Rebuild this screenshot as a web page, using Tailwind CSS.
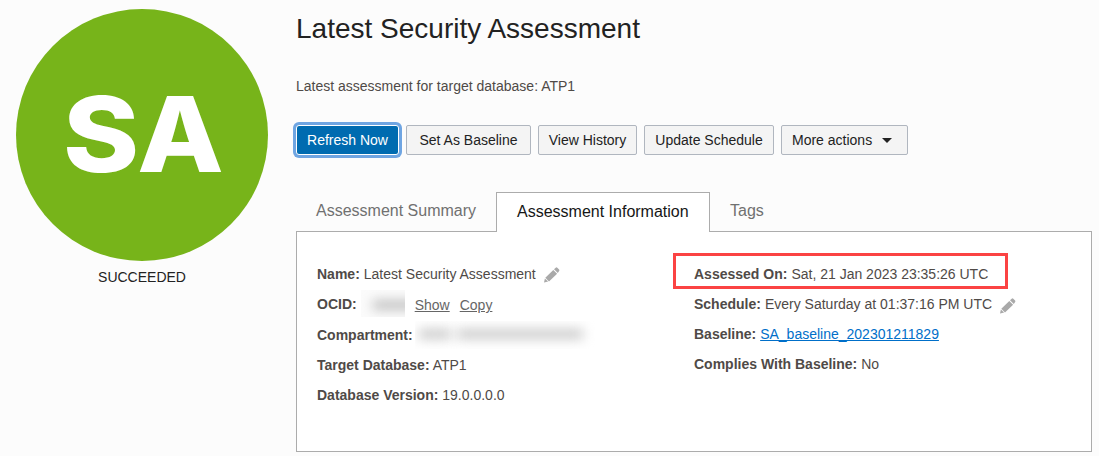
<!DOCTYPE html>
<html lang="en">
<head>
<meta charset="utf-8">
<title>Latest Security Assessment</title>
<script src="https://cdn.jsdelivr.net/npm/@tailwindcss/browser@4"></script>
</head>
<body class="h-[456px] w-[1099px] overflow-hidden bg-[#fcfcfc] font-['Liberation_Sans',Arial,sans-serif] text-sm leading-5 text-[#4f4a47]">
<div class="flex">
  <aside class="flex w-[268px] shrink-0 flex-col pt-[9px] pl-4">
    <svg class="size-[252px]" viewBox="0 0 252 252">
      <circle cx="126" cy="126" r="126" fill="#77b41a"/>
      <g font-family="Inter, 'Liberation Sans', sans-serif" font-weight="850" font-size="104" fill="#fff" text-anchor="middle">
        <text transform="translate(85 162.800) scale(1.110 1)">S</text>
        <text transform="translate(164.500 163) scale(1.080 1)">A</text>
      </g>
    </svg>
    <p class="mt-1.5 text-center text-[#222]"><span>SUCCEEDED</span></p>
  </aside>
  <main class="ml-7 w-[796px]">
    <h1 class="mt-[13px] text-[28px] leading-8 text-[#222]"><span>Latest Security Assessment</span></h1>
    <p class="mt-[31px]"><span>Latest assessment for target database: ATP1</span></p>
    <div class="mt-[29px] flex h-[30px] text-[#222]">
      <button class="h-[30px] w-[103px] rounded-[3px] border border-white bg-[#006bb0] text-white shadow-[0_0_0_3px_#6fa5e2]">Refresh Now</button>
      <button class="ml-[7px] h-[30px] w-[125px] rounded-[2px] border border-[#b0b6bf] bg-[#f4f4f4]">Set As Baseline</button>
      <button class="ml-[7px] h-[30px] w-[99px] rounded-[2px] border border-[#b0b6bf] bg-[#f4f4f4]">View History</button>
      <button class="ml-[7px] h-[30px] w-[130px] rounded-[2px] border border-[#b0b6bf] bg-[#f4f4f4]">Update Schedule</button>
      <button class="ml-[7px] flex h-[30px] w-[127px] items-center rounded-[2px] border border-[#b0b6bf] bg-[#f4f4f4] pl-2.5">More actions<svg class="ml-2.5 h-[5px] w-2.5" viewBox="0 0 10 5"><path d="M0 0h10L5 5z" fill="#222"/></svg></button>
    </div>
    <div class="mt-[37px] flex h-10 text-base leading-5 text-[#707070]">
      <div class="w-[200px] border-b border-[#acacac] pt-[9px] pl-5">Assessment Summary</div>
      <div class="w-[214px] border border-b-0 border-[#acacac] bg-white pt-[9px] pl-5 text-[#161616]">Assessment Information</div>
      <div class="flex-1 border-b border-[#acacac] pt-[9px] pl-5">Tags</div>
    </div>
    <section class="flex h-[220px] border border-t-0 border-[#acacac] bg-white pt-8 pl-5">
      <div class="w-[356px]">
        <div class="flex h-[30px]"><b>Name:</b><span class="ml-1">Latest Security Assessment</span>
          <svg class="mt-[3px] ml-2 size-4" viewBox="0 0 16 16" fill="#a9a9a9"><path d="M0 15.500l.900-4 3.200 3.100zM1.300 10.800l8-7.900 3.800 3.800-8.100 7.700zM10 2.200l1.700-1.500q.800-.700 1.600 0l1.800 1.800q.700.800 0 1.600L13.800 6z"/></svg></div>
        <div class="flex h-[31px]"><b>OCID:</b>
          <div class="-mt-1 ml-1 h-[27px] w-[44px] overflow-hidden bg-[#fbfbfb]"><div class="mt-[11px] ml-3 h-2 w-12 bg-[#b4b4b4] blur-[6px]"></div></div>
          <span class="ml-2.5 pt-px text-[#666] underline">Show</span><span class="ml-2.5 pt-px text-[#666] underline">Copy</span></div>
        <div class="flex h-[30px]"><b>Compartment:</b>
          <div class="-mt-1 ml-0.5 flex h-7 w-[185px] gap-1.5 overflow-hidden pt-2"><div class="ml-1 h-2.5 w-8 bg-[#cacaca] blur-[6px]"></div><div class="h-2.5 w-[126px] bg-[#cacaca] blur-[6px]"></div></div></div>
        <div class="h-[30px]"><b>Target Database:</b> ATP1</div>
        <div class="h-[30px]"><b>Database Version:</b> 19.0.0.0.0</div>
      </div>
      <div class="-mt-[11px]">
        <div class="flex h-9 w-[335px] items-center border-[3px] border-[#fb4343] pt-1.5 pl-[18px]"><b>Assessed On:</b><span class="ml-1">Sat, 21 Jan 2023 23:35:26 UTC</span></div>
        <div class="mt-[5px] ml-[21px] flex h-[30px]"><b>Schedule:</b><span class="ml-1">Every Saturday at 01:37:16 PM UTC</span>
          <svg class="mt-1 ml-2 size-4" viewBox="0 0 16 16" fill="#a9a9a9"><path d="M0 15.500l.900-4 3.200 3.100zM1.300 10.800l8-7.900 3.800 3.800-8.100 7.700zM10 2.200l1.700-1.500q.800-.700 1.600 0l1.800 1.800q.700.800 0 1.600L13.800 6z"/></svg></div>
        <div class="ml-[21px] h-[30px]"><b>Baseline:</b> <a class="text-[#006fc9] underline">SA_baseline_202301211829</a></div>
        <div class="ml-[21px] h-[30px]"><b>Complies With Baseline:</b> No</div>
      </div>
    </section>
  </main>
</div>
</body>
</html>
